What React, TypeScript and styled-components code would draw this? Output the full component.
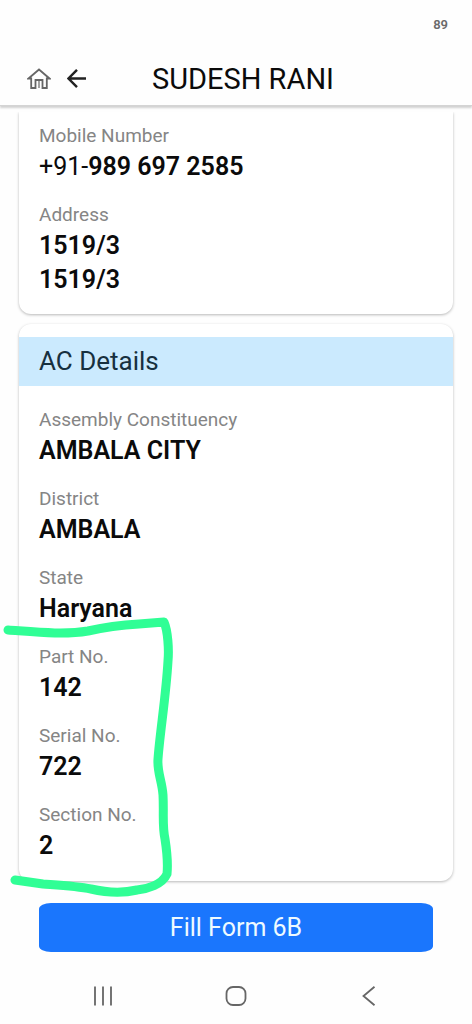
import React from "react";
import styled, { createGlobalStyle } from "styled-components";

const GlobalStyle = createGlobalStyle`
  *, *::before, *::after { box-sizing: border-box; }
  body {
    margin: 0;
    background: #fefefe;
    color: #0b0b0b;
    font-family: Roboto, "Liberation Sans", sans-serif;
  }
`;

const Screen = styled.div`
  display: flex;
  flex-direction: column;
  min-height: 100vh;
  overflow-x: hidden;
`;

const StatusBar = styled.div`
  display: flex;
  justify-content: flex-end;
  padding: 16px 24px 0;
  height: 52px;
  font-size: 13px;
  line-height: 18px;
  font-weight: 600;
  color: #6a6a6a;
`;

const Toolbar = styled.header`
  display: grid;
  grid-template-columns: 1fr auto 1fr;
  align-items: center;
  height: 54px;
  padding: 0 10px 0 24px;
  border-bottom: 1px solid #d4d4d4;
  box-shadow: 0 2px 2px rgba(0, 0, 0, 0.18);
`;

const ToolbarActions = styled.div`
  display: flex;
  gap: 8px;
`;

const IconButton = styled.button`
  display: flex;
  align-items: center;
  justify-content: center;
  width: 30px;
  height: 32px;
  padding: 0;
  border: 0;
  background: none;
  color: inherit;
`;

const Title = styled.h1`
  margin: 0;
  font-size: 29px;
  line-height: 34px;
  font-weight: 400;
  white-space: nowrap;
`;

const Content = styled.main`
  display: flex;
  flex-direction: column;
  gap: 10px;
  padding: 6px 19px 0;
`;

const Card = styled.section<{ $continued?: boolean }>`
  background: #fff;
  border-radius: ${(p) => (p.$continued ? "0 0 12px 12px" : "12px")};
  box-shadow: 0 1px 3px rgba(0, 0, 0, 0.28);
  clip-path: ${(p) => (p.$continued ? "inset(0 -6px -6px -6px)" : "none")};
  padding-top: ${(p) => (p.$continued ? "0" : "13px")};
`;

const CardHeading = styled.h2`
  margin: 0;
  padding: 0 20px;
  background: #cbeafe;
  color: #17303f;
  font-size: 26px;
  line-height: 49px;
  font-weight: 400;
`;

const Fields = styled.dl<{ $top: number; $bottom: number }>`
  display: flex;
  flex-direction: column;
  gap: 17px;
  margin: 0;
  padding: ${(p) => p.$top}px 20px ${(p) => p.$bottom}px;
`;

const MarkedFields = styled.div`
  position: relative;
  display: flex;
  flex-direction: column;
  gap: 17px;
`;

const FieldLabel = styled.dt`
  font-size: 19px;
  line-height: 28px;
  color: #858585;
`;

const FieldValue = styled.dd`
  margin: 0;
  font-size: 25px;
  line-height: 34px;
  font-weight: 600;
`;

const Prefix = styled.span`
  font-weight: 400;
`;

const Marker = styled.svg`
  position: absolute;
  left: -39px;
  top: -28px;
  width: 180px;
  height: 284px;
  pointer-events: none;
`;

const Actions = styled.div`
  padding: 22px 39px 15px;
`;

const PrimaryButton = styled.button`
  display: block;
  width: 100%;
  height: 49px;
  padding: 0;
  border: 0;
  border-radius: 12px / 6px;
  background: #1a76fd;
  color: #eefaff;
  font-family: inherit;
  font-size: 25px;
  line-height: 49px;
`;

const SystemNav = styled.nav`
  display: flex;
  justify-content: space-around;
  align-items: center;
  height: 58px;
  padding: 0 36px;
  color: #666;
`;

function Field({ label, children }: { label: string; children: React.ReactNode }) {
  return (
    <div>
      <FieldLabel>{label}</FieldLabel>
      {children}
    </div>
  );
}

export default function App() {
  return (
    <>
      <GlobalStyle />
      <Screen>
        <StatusBar>89</StatusBar>
        <Toolbar>
          <ToolbarActions>
            <IconButton type="button" aria-label="Home">
              <svg width="24" height="22" viewBox="0 0 24 22" fill="none" stroke="#666" strokeWidth="1.800">
                <path d="M1.500 10.500 12 1.500 22.500 10.500H19.800V20H15.500V12H8.500V20H4.200V10.500Z" />
                <path d="M12 12.500V20" strokeWidth="1.200" />
              </svg>
            </IconButton>
            <IconButton type="button" aria-label="Back">
              <svg width="20" height="20" viewBox="0 0 20 20" fill="none" stroke="#222" strokeWidth="2.400">
                <path d="M10 .8 1.500 9.500l8.500 8.700M1.500 9.500H19" />
              </svg>
            </IconButton>
          </ToolbarActions>
          <Title>SUDESH RANI</Title>
        </Toolbar>

        <Content>
          <Card $continued>
            <Fields $top={10} $bottom={17}>
              <Field label="Mobile Number">
                <FieldValue>
                  <Prefix>+91-</Prefix>989 697 2585
                </FieldValue>
              </Field>
              <Field label="Address">
                <FieldValue>1519/3</FieldValue>
                <FieldValue>1519/3</FieldValue>
              </Field>
            </Fields>
          </Card>

          <Card>
            <CardHeading>AC Details</CardHeading>
            <Fields $top={20} $bottom={18}>
              <Field label="Assembly Constituency">
                <FieldValue>AMBALA CITY</FieldValue>
              </Field>
              <Field label="District">
                <FieldValue>AMBALA</FieldValue>
              </Field>
              <Field label="State">
                <FieldValue>Haryana</FieldValue>
              </Field>
              <MarkedFields>
                <Field label="Part No.">
                  <FieldValue>142</FieldValue>
                </Field>
                <Field label="Serial No.">
                  <FieldValue>722</FieldValue>
                </Field>
                <Field label="Section No.">
                  <FieldValue>2</FieldValue>
                </Field>
                <Marker viewBox="0 615 180 284" aria-hidden="true">
                  <path
                    d="M8 630C36 632 64 635 88 631C110 626 122 625 139 624L164 622C168 631 169 650 168 661C166 696 160 732 158 759C157 772 162 781 163 795C164 813 162 825 165 839C167 852 168 864 167 874C162 885 147 889 137 890C120 894 104 892 91 889C76 886 56 885 43 884L15 880"
                    fill="none"
                    stroke="#30fe95"
                    strokeWidth="9"
                    strokeLinecap="round"
                    strokeLinejoin="round"
                  />
                </Marker>
              </MarkedFields>
            </Fields>
          </Card>
        </Content>

        <Actions>
          <PrimaryButton type="button">Fill Form 6B</PrimaryButton>
        </Actions>

        <SystemNav aria-label="System navigation">
          <IconButton type="button" aria-label="Recent apps">
            <svg width="20" height="20" viewBox="0 0 20 20" stroke="#666" strokeWidth="1.800">
              <path d="M2 .5V19.500M10 .5V19.500M18 .5V19.500" />
            </svg>
          </IconButton>
          <IconButton type="button" aria-label="Home screen">
            <svg width="22" height="20" viewBox="0 0 22 20" fill="none" stroke="#666" strokeWidth="1.800">
              <rect x="1.500" y="1" width="19" height="18" rx="6.500" />
            </svg>
          </IconButton>
          <IconButton type="button" aria-label="Go back">
            <svg width="14" height="20" viewBox="0 0 14 20" fill="none" stroke="#666" strokeWidth="1.800">
              <path d="M12.500 .8 1.500 10l11 9.200" />
            </svg>
          </IconButton>
        </SystemNav>
      </Screen>
    </>
  );
}
